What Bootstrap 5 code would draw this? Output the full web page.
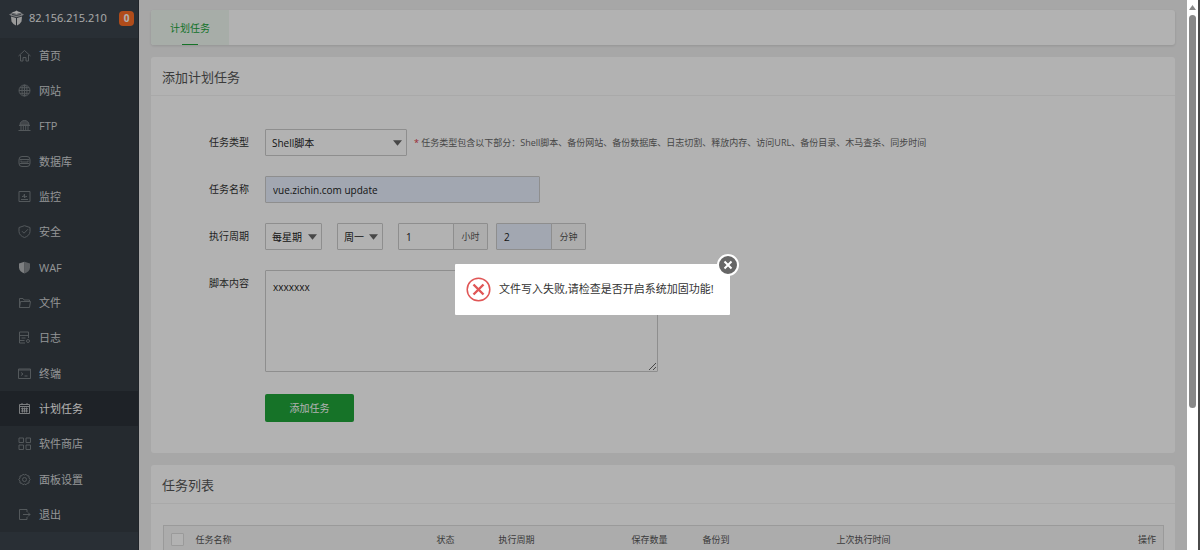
<!DOCTYPE html>
<html lang="zh-CN">
<head>
<meta charset="utf-8">
<meta name="viewport" content="width=device-width, initial-scale=1">
<title>计划任务</title>
<link href="https://cdn.jsdelivr.net/npm/bootstrap@5.3.0/dist/css/bootstrap.min.css" rel="stylesheet">
<style>
  body { font-family: "Open Sans", "Noto Sans CJK SC", sans-serif; font-size: 10px; line-height: 16px; color: #333; background: #f0f0f0; }
  input, select, textarea, button { font-family: inherit; }

  /* sidebar */
  .side-nav { width: 139px; background: #3c444d; border-right: 1px solid #30363d; }
  .side-head { height: 38px; padding: 0 4px 2px 9px; gap: 5px; font-size: 11px; color: #f4f4f4; }
  .side-count { width: 15px; height: 15px; line-height: 15px; border-radius: 4px; background: #fc6d26; color: #fff; font-size: 10px; font-weight: 700; }
  .side-list { background: #353d44; }
  .side-list a { height: 35px; padding-left: 18px; gap: 8px; font-size: 11px; color: #d4d6d8; }
  .side-list li:nth-child(3n) { padding-bottom: 1px; }
  .side-list a.active { background: #2c3138; color: #fff; }
  .side-list svg { width: 13px; height: 13px; flex: none; fill: none; stroke: #787e83; stroke-width: 1; }
  .side-list a.active svg { stroke: #b0b4b7; }

  /* panels */
  .work-area { padding: 10px 12px 0; gap: 12px; }
  .panel-box { background: #fff; border-radius: 3px; }
  .tab-strip { height: 35px; box-shadow: 0 1px 3px rgba(0,0,0,.12); overflow: hidden; }
  .tab-strip a { width: 78px; color: #20a53a; background: #eff8f1; }
  .tab-strip a::after { content: ""; width: 16px; height: 1px; background: #20a53a; position: absolute; bottom: 0; left: 50%; margin-left: -8px; }
  .panel-title { height: 39px; padding: 0 11px; margin: 0; font-size: 13px; font-weight: 400; line-height: 40px; color: #555; border-bottom: 1px solid #f3f3f3; }
  .task-form { padding: 33px 12px 31px 0; }
  .form-line { margin-bottom: 20px; }
  .form-line > label, .line-space { width: 98px; margin-right: 16px; text-align: right; line-height: 27px; flex: none; }

  .form-control.field, .form-select.field { height: 27px; min-height: 0; padding: 0 7px; font-size: 10px; line-height: 16px; border: 1px solid #ccc; border-radius: 1px; color: #222; background-color: #fff; }
  .form-select.field { padding: 0 16px 0 6px; background-image: url("data:image/svg+xml,%3Csvg xmlns='http://www.w3.org/2000/svg' viewBox='0 0 10 6'%3E%3Cpath fill='%23666' d='M0 0h10L5 6z'/%3E%3C/svg%3E"); background-size: 9px 6px; background-position: right 4px center; }
  .form-control.field.filled { background-color: #e8f0fe; }
  .w-type { width: 142px; }
  .form-control.w-name { width: 275px; }
  .w-cycle { width: 57px; }
  .w-day { width: 46px; }
  .cycle-gap { margin-left: 15px; }
  .unit-group { width: 90px; }
  .unit-group .input-group-text { width: 35px; padding: 0; justify-content: center; font-size: 9px; line-height: 16px; color: #555; background: #f8f8f8; border-color: #ccc; border-radius: 1px; }
  textarea.form-control.field { width: 393px; height: 102px; padding: 8px 7px; }
  .hint { margin-left: 7px; font-size: 9px; color: #666; }
  .btn.btn-add { width: 89px; height: 28px; padding: 0; font-size: 10px; color: #fff; background: #20a53a; border: 0; border-radius: 2px; }
  .add-line { padding-top: 2px; }

  .table-wrap { padding: 21px 11px 20px 12px; }
  .task-table { margin: 0; font-size: 9px; line-height: 16px; border: 1px solid #ddd; table-layout: fixed; }
  .task-table th { height: 28px; padding: 0 7px; font-weight: 400; vertical-align: middle; color: #555; background: #f6f6f6; border-bottom: 1px solid #ddd; }
  .task-table .form-check-input { width: 13px; height: 13px; margin: 0; border-color: #ddd; border-radius: 1px; display: block; }

  /* message layer */
  .shade { background: rgba(0,0,0,.3); }
  .msg { width: 275px; height: 51px; margin: 28px 2px 0 0; padding-left: 11px; gap: 8px; font-size: 11px; color: #333; background: #fff; border-radius: 1px; }
  .msg-close { top: -10px; right: -9px; width: 22px; height: 22px; padding: 0; border: 0; background: none; }
  .msg-close svg { display: block; }

  .scroll-rail { width: 13px; padding: 4px 2px 0; background: #fff; border-right: 2px solid #4a4a4a; }
  .scroll-thumb { width: 7px; height: 72%; border-radius: 4px; background: #888; }
</style>
</head>
<body class="d-flex vh-100 overflow-hidden">
<div class="d-flex flex-grow-1 position-relative overflow-hidden">

  <nav class="side-nav flex-shrink-0">
    <div class="side-head d-flex align-items-center">
      <svg width="15" height="16" viewBox="0 0 15 16" fill="#ddd"><path d="M2 6.500 7 8v7.500L4.500 14 2.500 11.500zM13 6.500 8 8v7.500l2.500-1.500 2-2.500z"/><path d="M0 4.500l3-1.500 4.500 1 4.500-1 3 1.500-2 1.300L7.500 7.300 2 5.800z" fill="#b0b3b6"/><path d="M2.500 2.500 6 1.500l1.500-1L9 1.500l3.500 1L7.500 4z" fill="#eee"/><path d="M3 4.300l4.500 1.200L12 4.300" fill="none" stroke="#3c444d" stroke-width=".8"/></svg>
      <span class="flex-grow-1">82.156.215.210</span>
      <span class="side-count text-center">0</span>
    </div>
    <ul class="side-list nav flex-column">
      <li><a class="d-flex align-items-center text-decoration-none" href="#"><svg viewBox="0 0 13 13"><path d="M.5 7 6.500 1.500l6 5.500M2.500 6v6H5V8.500h3V12h2.500V6"/></svg>首页</a></li>
      <li><a class="d-flex align-items-center text-decoration-none" href="#"><svg viewBox="0 0 13 13"><circle cx="6.500" cy="6.500" r="5.500"/><ellipse cx="6.500" cy="6.500" rx="2.500" ry="5.500"/><path d="M6.500 1v11M1 6.500h11M2 3.700h9M2 9.300h9"/></svg>网站</a></li>
      <li><a class="d-flex align-items-center text-decoration-none" href="#"><svg viewBox="0 0 13 13"><path fill="#5d6369" d="M2 6c0-6 9-6 9 0z"/><path d="M1 6.500h11M3 7v4M5.300 7v4M7.700 7v4M10 7v4M.5 11.500h12"/></svg>FTP</a></li>
      <li><a class="d-flex align-items-center text-decoration-none" href="#"><svg viewBox="0 0 13 13"><rect x="1" y="1.500" width="11" height="10" rx="3"/><path d="M1.500 4.500h10M3 5.500v1.500h7V5.500M1.500 8.500h10"/></svg>数据库</a></li>
      <li><a class="d-flex align-items-center text-decoration-none" href="#"><svg viewBox="0 0 13 13"><path d="M1 1.500h11v10H1zM3 9.500h7M4 6.500h1.500L6.500 4v4l1-1.500H9"/></svg>监控</a></li>
      <li><a class="d-flex align-items-center text-decoration-none" href="#"><svg viewBox="0 0 13 13"><path d="M6.500.7 12 2.500v4c0 3-2.500 5-5.500 6C3.500 11.500 1 9.500 1 6.500v-4zM4 6.200l2 2 4-4"/></svg>安全</a></li>
      <li><a class="d-flex align-items-center text-decoration-none" href="#"><svg viewBox="0 0 13 13"><path stroke="none" fill="#b4b7b9" d="M6.500.7 1 2.500v4c0 3 2.500 5 5.500 6z"/><path stroke="none" fill="#85898d" d="M6.500.7 12 2.500v4c0 3-2.500 5-5.500 6z"/></svg>WAF</a></li>
      <li><a class="d-flex align-items-center text-decoration-none" href="#"><svg viewBox="0 0 13 13"><path d="M1.500 11.500v-9H5l1 1.500h5.500v1.500M1.500 11.500 2.500 5.500h10l-1 6z"/></svg>文件</a></li>
      <li><a class="d-flex align-items-center text-decoration-none" href="#"><svg viewBox="0 0 13 13"><path d="M7 12H1.500V1h9v6M1.500 4.500h9M3.500 7h4M1.500 9.500h5"/><circle cx="10" cy="10" r="1.500"/></svg>日志</a></li>
      <li><a class="d-flex align-items-center text-decoration-none" href="#"><svg viewBox="0 0 13 13"><path d="M.5 2h12v9.500H.5zM.5 3h12M3 5.500l2 1.500-2 1.500M6.500 9h3"/></svg>终端</a></li>
      <li><a class="active d-flex align-items-center text-decoration-none" href="#"><svg viewBox="0 0 13 13"><path d="M1.500 2.500h10v9h-10zM1.500 4.500h10M4 1v2M9 1v2M3 6.700h7M3 9h7M4.500 5.500v5M6.500 5.500v5M8.500 5.500v5"/></svg>计划任务</a></li>
      <li><a class="d-flex align-items-center text-decoration-none" href="#"><svg viewBox="0 0 13 13"><path d="M1 1h4.500v4.500H1zM8 1h4.500v4.500H8zM1 8h4.500v4.500H1zM8 8h4.500v4.500H8z"/></svg>软件商店</a></li>
      <li><a class="d-flex align-items-center text-decoration-none" href="#"><svg viewBox="0 0 13 13"><path d="M5 1.200 6.500 2 8 1.200l1 1.500 2 .3v2l1.200 1.500L11 8v2l-2 .3-1 1.500L6.500 11 5 11.800l-1-1.500L2 10V8L.8 6.500 2 5V3l2-.3z"/><circle cx="6.500" cy="6.500" r="2"/></svg>面板设置</a></li>
      <li><a class="d-flex align-items-center text-decoration-none" href="#"><svg viewBox="0 0 13 13"><path d="M9 4V1.500H1.500v10H9V9M5 6.500h7M10 4.500l2 2-2 2"/></svg>退出</a></li>
    </ul>
  </nav>

  <main class="work-area d-flex flex-column flex-grow-1">
    <div class="panel-box tab-strip d-flex flex-shrink-0">
      <a class="position-relative d-flex align-items-center justify-content-center text-decoration-none" href="#">计划任务</a>
    </div>

    <section class="panel-box flex-shrink-0">
      <h2 class="panel-title">添加计划任务</h2>
      <form class="task-form">
        <div class="form-line d-flex align-items-center">
          <label for="type">任务类型</label>
          <select id="type" class="form-select field w-type"><option>Shell脚本</option></select>
          <span class="hint"><span class="text-danger">*</span>&nbsp;任务类型包含以下部分：Shell脚本、备份网站、备份数据库、日志切割、释放内存、访问URL、备份目录、木马查杀、同步时间</span>
        </div>
        <div class="form-line d-flex">
          <label for="name">任务名称</label>
          <input id="name" type="text" class="form-control field filled w-name" value="vue.zichin.com update">
        </div>
        <div class="form-line d-flex">
          <label for="cycle">执行周期</label>
          <select id="cycle" class="form-select field w-cycle"><option>每星期</option></select>
          <select class="form-select field w-day cycle-gap" aria-label="星期"><option>周一</option></select>
          <div class="input-group unit-group flex-nowrap cycle-gap">
            <input type="text" id="hour" class="form-control field" value="1" aria-label="小时">
            <label class="input-group-text" for="hour">小时</label>
          </div>
          <div class="input-group unit-group flex-nowrap ms-2">
            <input type="text" id="minute" class="form-control field filled" value="2" aria-label="分钟">
            <label class="input-group-text" for="minute">分钟</label>
          </div>
        </div>
        <div class="form-line d-flex">
          <label for="script">脚本内容</label>
          <textarea id="script" class="form-control field">xxxxxxx</textarea>
        </div>
        <div class="add-line d-flex">
          <span class="line-space"></span>
          <button type="button" class="btn btn-add">添加任务</button>
        </div>
      </form>
    </section>

    <section class="panel-box flex-shrink-0">
      <h2 class="panel-title">任务列表</h2>
      <div class="table-wrap">
        <table class="table task-table">
          <colgroup><col style="width:2.5%"><col style="width:24.1%"><col style="width:6.2%"><col style="width:13.3%"><col style="width:7.1%"><col style="width:13.4%"><col><col style="width:8%"></colgroup>
          <thead><tr>
            <th><input class="form-check-input" type="checkbox" aria-label="全选"></th>
            <th>任务名称</th><th>状态</th><th>执行周期</th><th>保存数量</th><th>备份到</th><th>上次执行时间</th><th class="text-end">操作</th>
          </tr></thead>
        </table>
      </div>
    </section>
  </main>

  <div class="shade position-absolute top-0 start-0 w-100 h-100 d-flex align-items-center justify-content-center">
    <div class="msg position-relative d-flex align-items-center" role="alert">
      <svg width="25" height="25" viewBox="0 0 25 25" fill="none" stroke="#e05656"><circle cx="12.500" cy="12.500" r="11.300" stroke-width="1.500"/><path d="M7.500 7.500l10 10M17.500 7.500l-10 10" stroke-width="2.400"/></svg>
      <span>文件写入失败,请检查是否开启系统加固功能!</span>
      <button type="button" class="msg-close position-absolute" aria-label="关闭"><svg width="22" height="22" viewBox="0 0 22 22"><circle cx="11" cy="11" r="10" fill="#666" stroke="#fff" stroke-width="2"/><path d="M7.500 7.500l7 7M14.500 7.500l-7 7" stroke="#fff" stroke-width="2"/></svg></button>
    </div>
  </div>
</div>

<div class="scroll-rail d-flex flex-column align-items-center flex-shrink-0">
  <svg class="mb-1 flex-shrink-0" width="7" height="7" viewBox="0 0 7 7" fill="#888"><path d="M3.500 1 7 6H0z"/></svg>
  <div class="scroll-thumb"></div>
</div>
<script src="https://cdn.jsdelivr.net/npm/bootstrap@5.3.0/dist/js/bootstrap.bundle.min.js"></script>
</body>
</html>
